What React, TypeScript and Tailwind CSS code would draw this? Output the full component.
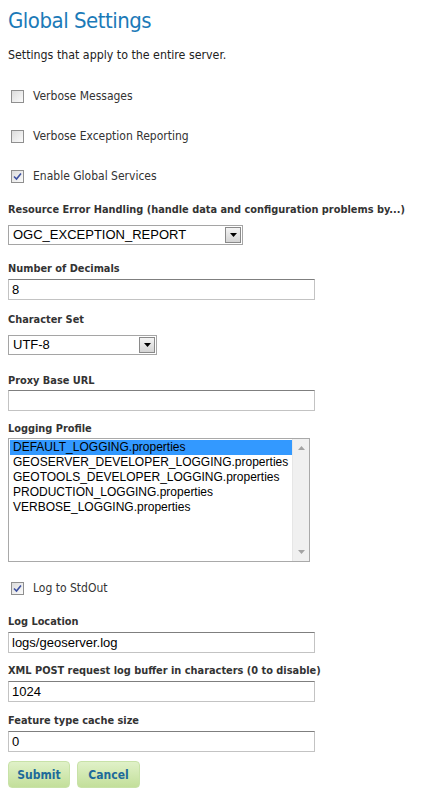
import React from "react";

const body = { fontFamily: '"DejaVu Sans Condensed", "DejaVu Sans", sans-serif' };
const arial = { fontFamily: '"Liberation Sans", Arial, sans-serif' };

function Checkbox({ checked }: { checked?: boolean }) {
  return (
    <div className="w-[13px] h-[13px] border border-[#8f8f8f] bg-gradient-to-br from-[#dcdcdc] to-[#fbfbfb] flex items-center justify-center">
      {checked && (
        <svg width="9" height="9" viewBox="0 0 9 9">
          <path d="M1 4.5 L3.5 7 L8 1.5" stroke="#3d50a0" strokeWidth="1.6" fill="none" />
        </svg>
      )}
    </div>
  );
}

function CheckRow({ label, checked }: { label: string; checked?: boolean }) {
  return (
    <div className="flex items-center h-[14px] pl-[3px]">
      <Checkbox checked={checked} />
      <span className="ml-[9px] text-[12px] text-[#333]">{label}</span>
    </div>
  );
}

function Label({ children }: { children: React.ReactNode }) {
  return <div className="text-[10.9px] font-bold text-[#333] leading-[14px] whitespace-nowrap">{children}</div>;
}

function TextInput({ value }: { value?: string }) {
  return (
    <div
      className="w-[307px] h-[21px] border border-[#c3c3c3] border-t-[#7f7f7f] bg-white flex items-center px-[3px] text-[13px] text-black"
      style={arial}
    >
      {value}
    </div>
  );
}

function Select({ value, width }: { value: string; width: string }) {
  return (
    <div
      className={`${width} h-[20px] border border-[#a5a5a5] bg-white flex items-center justify-between text-[13px] text-black`}
      style={arial}
    >
      <span className="pl-[4px]">{value}</span>
      <div className="w-[16px] h-[16px] mr-[1px] border border-[#8a8a8a] bg-gradient-to-b from-[#f4f4f4] to-[#d4d4d4] flex items-center justify-center">
        <svg width="7" height="4" viewBox="0 0 7 4">
          <path d="M0 0 H7 L3.5 4 Z" fill="#000" />
        </svg>
      </div>
    </div>
  );
}

export default function App() {
  const items = [
    "DEFAULT_LOGGING.properties",
    "GEOSERVER_DEVELOPER_LOGGING.properties",
    "GEOTOOLS_DEVELOPER_LOGGING.properties",
    "PRODUCTION_LOGGING.properties",
    "VERBOSE_LOGGING.properties",
  ];
  return (
    <div className="w-[431px] h-[797px] bg-white px-[8px] overflow-hidden" style={body}>
      <h1 className="pt-[6px] text-[22px] leading-[30px] tracking-[-0.5px] text-[#1b7ab8]">Global Settings</h1>
      <p className="mt-[12px] text-[12.3px] leading-[14px] text-[#222]">Settings that apply to the entire server.</p>

      <div className="mt-[27px] flex flex-col gap-[26px]">
        <CheckRow label="Verbose Messages" />
        <CheckRow label="Verbose Exception Reporting" />
        <CheckRow label="Enable Global Services" checked />
      </div>

      <div className="mt-[20px]">
        <Label>Resource Error Handling (handle data and configuration problems by...)</Label>
        <div className="mt-[8px]">
          <Select value="OGC_EXCEPTION_REPORT" width="w-[235px]" />
        </div>
      </div>

      <div className="mt-[17px]">
        <Label>Number of Decimals</Label>
        <div className="mt-[3px]"><TextInput value="8" /></div>
      </div>

      <div className="mt-[13px]">
        <Label>Character Set</Label>
        <div className="mt-[8px]">
          <Select value="UTF-8" width="w-[149px]" />
        </div>
      </div>

      <div className="mt-[19px]">
        <Label>Proxy Base URL</Label>
        <div className="mt-[2px]"><TextInput /></div>
      </div>

      <div className="mt-[11px]">
        <Label>Logging Profile</Label>
        <div
          className="mt-[2px] w-[302px] h-[124px] border border-[#a9a9a9] bg-white flex text-[12px] text-black"
          style={arial}
        >
          <div className="flex-1 pt-[1px] pl-[1px]">
            {items.map((it, i) => (
              <div
                key={it}
                className={`h-[15px] leading-[15px] pl-[3px] ${i === 0 ? "bg-[#3399ff]" : ""}`}
              >
                {it}
              </div>
            ))}
          </div>
          <div className="w-[17px] bg-[#f0f0f0] border-l border-[#e6e6e6] flex flex-col justify-between items-center py-[7px]">
            <svg width="7" height="4" viewBox="0 0 7 4"><path d="M0 4 H7 L3.5 0 Z" fill="#a3a3a3" /></svg>
            <svg width="7" height="4" viewBox="0 0 7 4"><path d="M0 0 H7 L3.5 4 Z" fill="#a3a3a3" /></svg>
          </div>
        </div>
      </div>

      <div className="mt-[19px]">
        <CheckRow label="Log to StdOut" checked />
      </div>

      <div className="mt-[20px]">
        <Label>Log Location</Label>
        <div className="mt-[3px]"><TextInput value="logs/geoserver.log" /></div>
      </div>

      <div className="mt-[11px]">
        <Label>XML POST request log buffer in characters (0 to disable)</Label>
        <div className="mt-[3px]"><TextInput value="1024" /></div>
      </div>

      <div className="mt-[12px]">
        <Label>Feature type cache size</Label>
        <div className="mt-[3px]"><TextInput value="0" /></div>
      </div>

      <div className="mt-[9px] flex gap-[7px]">
        <button className="w-[62px] h-[27px] rounded-[4px] border border-[#c8e2a8] bg-gradient-to-b from-[#e0f1c8] to-[#c3df9a] text-[12px] font-bold text-[#1d6a9a]">
          Submit
        </button>
        <button className="w-[63px] h-[27px] rounded-[4px] border border-[#c8e2a8] bg-gradient-to-b from-[#e0f1c8] to-[#c3df9a] text-[12px] font-bold text-[#1d6a9a]">
          Cancel
        </button>
      </div>
    </div>
  );
}
